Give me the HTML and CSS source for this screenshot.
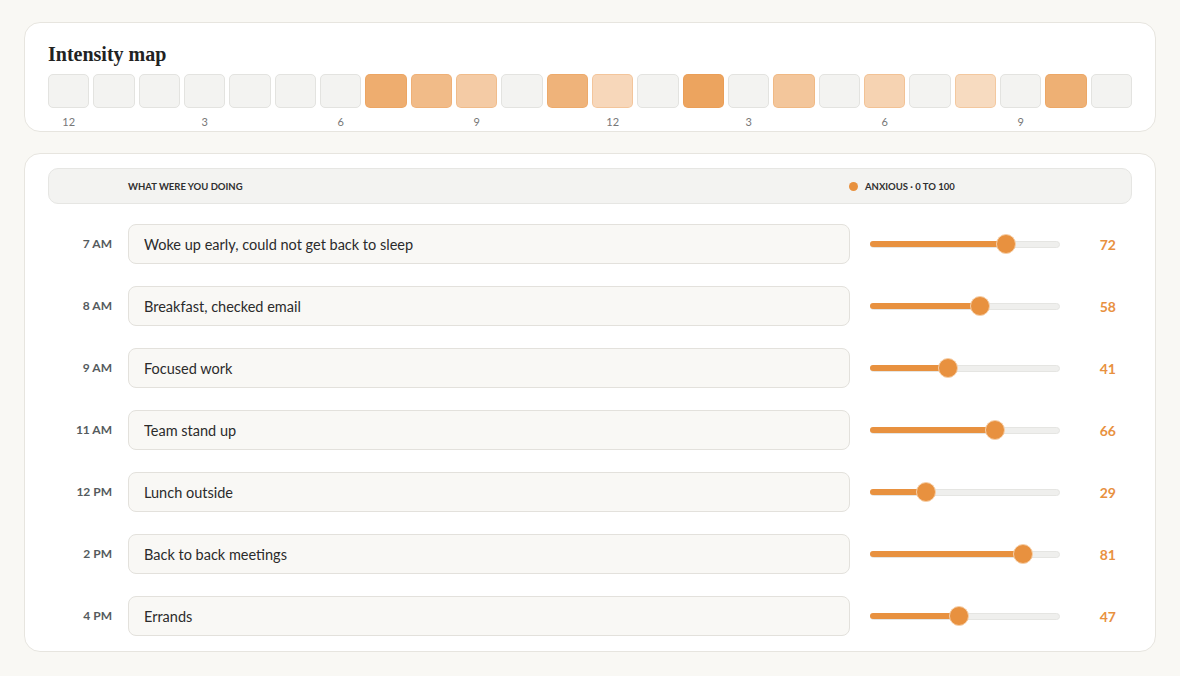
FILE: index.html
```html
<!DOCTYPE html>
<html lang="en">
<head>
    <meta charset="UTF-8">
    <meta name="viewport" content="width=device-width, initial-scale=1.0">
    <link rel="stylesheet" href="styles.css">
    <title>Mood log</title>
</head>
<body>
    <div class="container">
        <div class="card map-card">
            <h2>Intensity map</h2>
            <div class="hour-grid">
                <div class="cell"></div>
                <div class="cell"></div>
                <div class="cell"></div>
                <div class="cell"></div>
                <div class="cell"></div>
                <div class="cell"></div>
                <div class="cell"></div>
                <div class="cell hot" style="background: rgba(232, 145, 63, 0.75)"></div>
                <div class="cell hot" style="background: rgba(232, 145, 63, 0.62)"></div>
                <div class="cell hot" style="background: rgba(232, 145, 63, 0.47)"></div>
                <div class="cell"></div>
                <div class="cell hot" style="background: rgba(232, 145, 63, 0.69)"></div>
                <div class="cell hot" style="background: rgba(232, 145, 63, 0.36)"></div>
                <div class="cell"></div>
                <div class="cell hot" style="background: rgba(232, 145, 63, 0.83)"></div>
                <div class="cell"></div>
                <div class="cell hot" style="background: rgba(232, 145, 63, 0.52)"></div>
                <div class="cell"></div>
                <div class="cell hot" style="background: rgba(232, 145, 63, 0.40)"></div>
                <div class="cell"></div>
                <div class="cell hot" style="background: rgba(232, 145, 63, 0.33)"></div>
                <div class="cell"></div>
                <div class="cell hot" style="background: rgba(232, 145, 63, 0.72)"></div>
                <div class="cell"></div>
            </div>
            <div class="hour-labels">
                <span>12</span><span>3</span><span>6</span><span>9</span>
                <span>12</span><span>3</span><span>6</span><span>9</span>
            </div>
        </div>

        <div class="card log-card">
            <div class="log-header">
                <span></span>
                <span class="col-title">What were you doing</span>
                <span class="col-title scale-title"><i class="dot"></i>Anxious · 0 to 100</span>
            </div>

            <div class="entry">
                <span class="time">7 AM</span>
                <input class="activity" type="text" value="Woke up early, could not get back to sleep">
                <div class="slider"><div class="fill" style="width: 72%"></div><div class="thumb" style="left: 72%"></div></div>
                <span class="value">72</span>
            </div>
            <div class="entry">
                <span class="time">8 AM</span>
                <input class="activity" type="text" value="Breakfast, checked email">
                <div class="slider"><div class="fill" style="width: 58%"></div><div class="thumb" style="left: 58%"></div></div>
                <span class="value">58</span>
            </div>
            <div class="entry">
                <span class="time">9 AM</span>
                <input class="activity" type="text" value="Focused work">
                <div class="slider"><div class="fill" style="width: 41%"></div><div class="thumb" style="left: 41%"></div></div>
                <span class="value">41</span>
            </div>
            <div class="entry">
                <span class="time">11 AM</span>
                <input class="activity" type="text" value="Team stand up">
                <div class="slider"><div class="fill" style="width: 66%"></div><div class="thumb" style="left: 66%"></div></div>
                <span class="value">66</span>
            </div>
            <div class="entry">
                <span class="time">12 PM</span>
                <input class="activity" type="text" value="Lunch outside">
                <div class="slider"><div class="fill" style="width: 29%"></div><div class="thumb" style="left: 29%"></div></div>
                <span class="value">29</span>
            </div>
            <div class="entry">
                <span class="time">2 PM</span>
                <input class="activity" type="text" value="Back to back meetings">
                <div class="slider"><div class="fill" style="width: 81%"></div><div class="thumb" style="left: 81%"></div></div>
                <span class="value">81</span>
            </div>
            <div class="entry">
                <span class="time">4 PM</span>
                <input class="activity" type="text" value="Errands">
                <div class="slider"><div class="fill" style="width: 47%"></div><div class="thumb" style="left: 47%"></div></div>
                <span class="value">47</span>
            </div>
        </div>
    </div>
</body>
</html>
```

FILE: styles.css
```css
body {
    font-family: Lato, 'Noto Sans', sans-serif;
    margin: 0;
    padding: 0;
    background: #f9f8f4;
    color: #2b2b2b;
}

.container {
    display: flex;
    flex-direction: column;
    gap: 21px;
    padding: 22px 24px;
}

.card {
    background: #fff;
    border: 1px solid #e7e5df;
    border-radius: 16px;
    padding: 14px 23px 15px;
}

.map-card {
    padding-top: 17px;
    padding-bottom: 2px;
}

h2 {
    font-family: 'Liberation Serif', serif;
    font-size: 20px;
    font-weight: 700;
    color: #222;
    margin: 0 0 6px;
    line-height: 28px;
}

/* one square per hour of the day */
.hour-grid {
    display: grid;
    grid-template-columns: repeat(24, 1fr);
    gap: 4px;
}

.cell {
    height: 34px;
    box-sizing: border-box;
    background: #f3f3f1;
    border: 1px solid #e3e3e0;
    border-radius: 5px;
}

.cell.hot {
    border-color: rgba(232, 145, 63, 0.25);
}

.hour-labels {
    display: grid;
    grid-template-columns: repeat(8, 1fr);
    gap: 4px;
    margin-top: 7px;
}

.hour-labels span {
    width: calc((100% - 8px) / 3);
    text-align: center;
    font-size: 11px;
    color: #777;
    line-height: 14px;
}

.log-card {
    display: flex;
    flex-direction: column;
    gap: 22px;
}

.log-header {
    display: grid;
    grid-template-columns: 64px 1fr 282px;
    align-items: center;
    height: 36px;
    box-sizing: border-box;
    background: #f3f3f1;
    border: 1px solid #e6e6e3;
    border-radius: 10px;
    margin-bottom: -2px;
}

.col-title {
    font-size: 9.5px;
    font-weight: 700;
    text-transform: uppercase;
    color: #2f2f2f;
    padding-left: 15px;
}

.scale-title {
    display: flex;
    align-items: center;
    padding-left: 0;
}

.dot {
    display: inline-block;
    width: 9px;
    height: 9px;
    border-radius: 50%;
    background: #e8913f;
    margin-right: 7px;
}

.entry {
    display: grid;
    grid-template-columns: 64px 1fr 190px 56px;
    align-items: center;
    padding-right: 16px;
}

.time {
    text-align: right;
    font-size: 12px;
    font-weight: 700;
    color: #555b5e;
    margin-top: -2px;
}

.activity {
    height: 40px;
    box-sizing: border-box;
    margin: 0 20px 0 16px;
    padding: 0 15px;
    background: #f9f8f5;
    border: 1px solid #e3e1dc;
    border-radius: 8px;
    font-family: inherit;
    font-size: 14.5px;
    color: #2b2b2b;
    outline: none;
}

.slider {
    position: relative;
    height: 7px;
    box-sizing: border-box;
    background: #efefed;
    border: 1px solid #e5e5e2;
    border-radius: 4px;
}

.fill {
    height: 6px;
    margin: -1px 0 0 -1px;
    background: #e8913f;
    border-radius: 3px;
}

.thumb {
    position: absolute;
    top: 50%;
    width: 20px;
    height: 20px;
    box-sizing: border-box;
    border-radius: 50%;
    background: #e8913f;
    border: 1px solid #f6cfa8;
    transform: translate(-50%, -50%);
}

.value {
    text-align: right;
    font-size: 14px;
    font-weight: 700;
    color: #e8913f;
}
```
